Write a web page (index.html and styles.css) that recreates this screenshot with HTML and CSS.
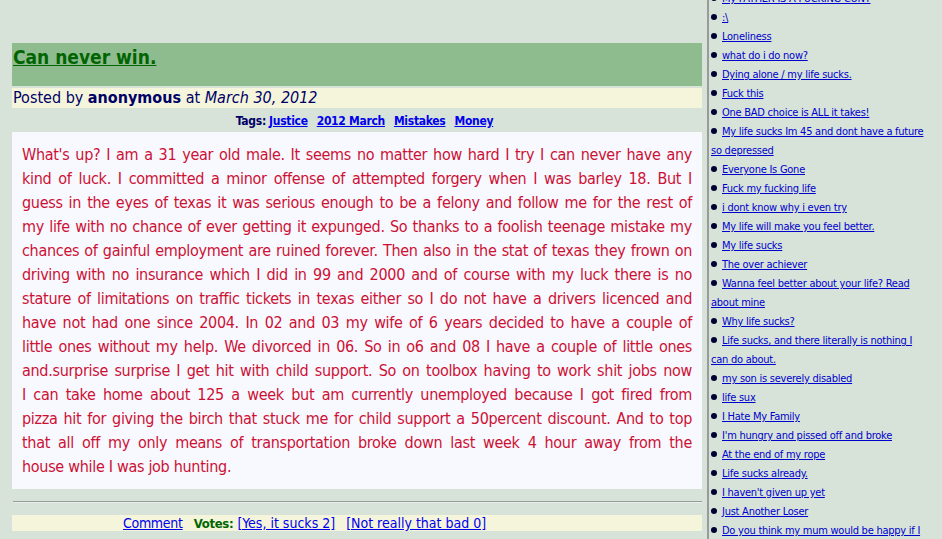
FILE: index.html
```html
<!DOCTYPE html>
<html>
<head>
<meta charset="utf-8">
<title>Can never win.</title>
<link rel="stylesheet" href="styles.css">
</head>
<body>
<div class="page">
  <div class="main">
    <div class="title-bar"><a class="title" href="#">Can never win.</a></div>
    <div class="posted">Posted by <b>anonymous</b> at <i>March 30, 2012</i></div>
    <div class="tags"><b>Tags:</b> <a href="#">Justice</a><a href="#">2012 March</a><a href="#">Mistakes</a><a href="#">Money</a></div>
    <div class="story">What's up? I am a 31 year old male. It seems no matter how hard I try I can never have any<br>
kind of luck. I committed a minor offense of attempted forgery when I was barley 18. But I<br>
guess in the eyes of texas it was serious enough to be a felony and follow me for the rest of<br>
my life with no chance of ever getting it expunged. So thanks to a foolish teenage mistake my<br>
chances of gainful employment are ruined forever. Then also in the stat of texas they frown on<br>
driving with no insurance which I did in 99 and 2000 and of course with my luck there is no<br>
stature of limitations on traffic tickets in texas either so I do not have a drivers licenced and<br>
have not had one since 2004. In 02 and 03 my wife of 6 years decided to have a couple of<br>
little ones without my help. We divorced in 06. So in o6 and 08 I have a couple of little ones<br>
and.surprise surprise I get hit with child support. So on toolbox having to work shit jobs now<br>
I can take home about 125 a week but am currently unemployed because I got fired from<br>
pizza hit for giving the birch that stuck me for child support a 50percent discount. And to top<br>
that all off my only means of transportation broke down last week 4 hour away from the
<div class="story-end">house while I was job hunting.</div></div>
    <hr class="rule">
    <div class="actions"><a href="#">Comment</a><span class="votes">Votes:</span><a href="#">[Yes, it sucks 2]</a><a href="#">[Not really that bad 0]</a></div>
  </div>
  <div class="sidebar">
    <ul class="list">
      <li><a href="#">My FATHER IS A FUCKING CUNT</a></li>
      <li><a href="#">:\</a></li>
      <li><a href="#">Loneliness</a></li>
      <li><a href="#">what do i do now?</a></li>
      <li><a href="#">Dying alone / my life sucks.</a></li>
      <li><a href="#">Fuck this</a></li>
      <li><a href="#">One BAD choice is ALL it takes!</a></li>
      <li><a href="#">My life sucks Im 45 and dont have a future so depressed</a></li>
      <li><a href="#">Everyone Is Gone</a></li>
      <li><a href="#">Fuck my fucking life</a></li>
      <li><a href="#">i dont know why i even try</a></li>
      <li><a href="#">My life will make you feel better.</a></li>
      <li><a href="#">My life sucks</a></li>
      <li><a href="#">The over achiever</a></li>
      <li><a href="#">Wanna feel better about your life? Read about mine</a></li>
      <li><a href="#">Why life sucks?</a></li>
      <li><a href="#">Life sucks, and there literally is nothing I can do about.</a></li>
      <li><a href="#">my son is severely disabled</a></li>
      <li><a href="#">life sux</a></li>
      <li><a href="#">I Hate My Family</a></li>
      <li><a href="#">I'm hungry and pissed off and broke</a></li>
      <li><a href="#">At the end of my rope</a></li>
      <li><a href="#">Life sucks already.</a></li>
      <li><a href="#">I haven't given up yet</a></li>
      <li><a href="#">Just Another Loser</a></li>
      <li><a href="#">Do you think my mum would be happy if I was gone?</a></li>
    </ul>
  </div>
</div>
</body>
</html>
```
FILE: styles.css
```css
html, body {
  margin: 0;
  padding: 0;
  height: 100%;
  overflow: hidden;
}
body {
  background: #d7e3d8;
  font-family: "DejaVu Sans Condensed", "DejaVu Sans", sans-serif;
  color: #000066;
}
.page {
  display: flex;
  align-items: flex-start;
  height: 539px;
}
.main {
  width: 690px;
  margin-left: 12px;
  padding-top: 43px;
  flex: none;
}
.title-bar {
  background: #8fbc8f;
  height: 43px;
  box-sizing: border-box;
  padding: 1px 0 0 1px;
  line-height: 26px;
}
.title {
  font-size: 19px;
  font-weight: bold;
  color: #006400;
}
.posted {
  margin-top: 2px;
  background: #f5f5dc;
  height: 20px;
  line-height: 20px;
  font-size: 16px;
  padding-left: 1px;
  color: #000066;
}
.tags {
  height: 24px;
  line-height: 26px;
  font-size: 12px;
  letter-spacing: -0.3px;
  text-align: center;
  padding-left: 24px;
}
.tags a {
  color: #0000ee;
  font-weight: bold;
  margin-right: 9px;
}
.story {
  background: #f8f8ff;
  padding: 11px 10px 10px 10px;
  font-size: 16px;
  letter-spacing: -0.3px;
  line-height: 24px;
  color: #cc1133;
  text-align: justify;
  text-align-last: justify;
}
.story-end {
  text-align: left;
  text-align-last: left;
}
.rule {
  margin: 12px 0 0 1px;
  border: none;
  border-top: 1px solid #999999;
  border-bottom: 1px solid #e8eee8;
  height: 0;
}
.actions {
  margin-top: 12px;
  background: #f5f5dc;
  height: 16px;
  line-height: 17px;
  font-size: 14px;
  padding-left: 111px;
}
.actions a {
  color: #0000ee;
  margin-right: 11px;
}
.actions a:first-child {
  letter-spacing: -0.3px;
  margin-right: 11px;
}
.actions .votes {
  color: #006600;
  font-weight: bold;
  font-size: 13px;
  letter-spacing: -0.3px;
  margin-right: 4px;
}
.sidebar {
  margin-left: 5px;
  border-left: 2px solid #9a9a9a;
  height: 539px;
  width: 218px;
  padding-left: 2px;
  flex: none;
}
.list {
  list-style: none;
  margin: -11px 0 0 0;
  padding: 0;
  font-size: 11px;
  letter-spacing: -0.25px;
  line-height: 19px;
}
.list li::before {
  content: "";
  display: inline-block;
  width: 6px;
  height: 6px;
  border-radius: 50%;
  background: #000033;
  margin-right: 5px;
  vertical-align: 1px;
}
.list a {
  color: #0000cc;
}
```
